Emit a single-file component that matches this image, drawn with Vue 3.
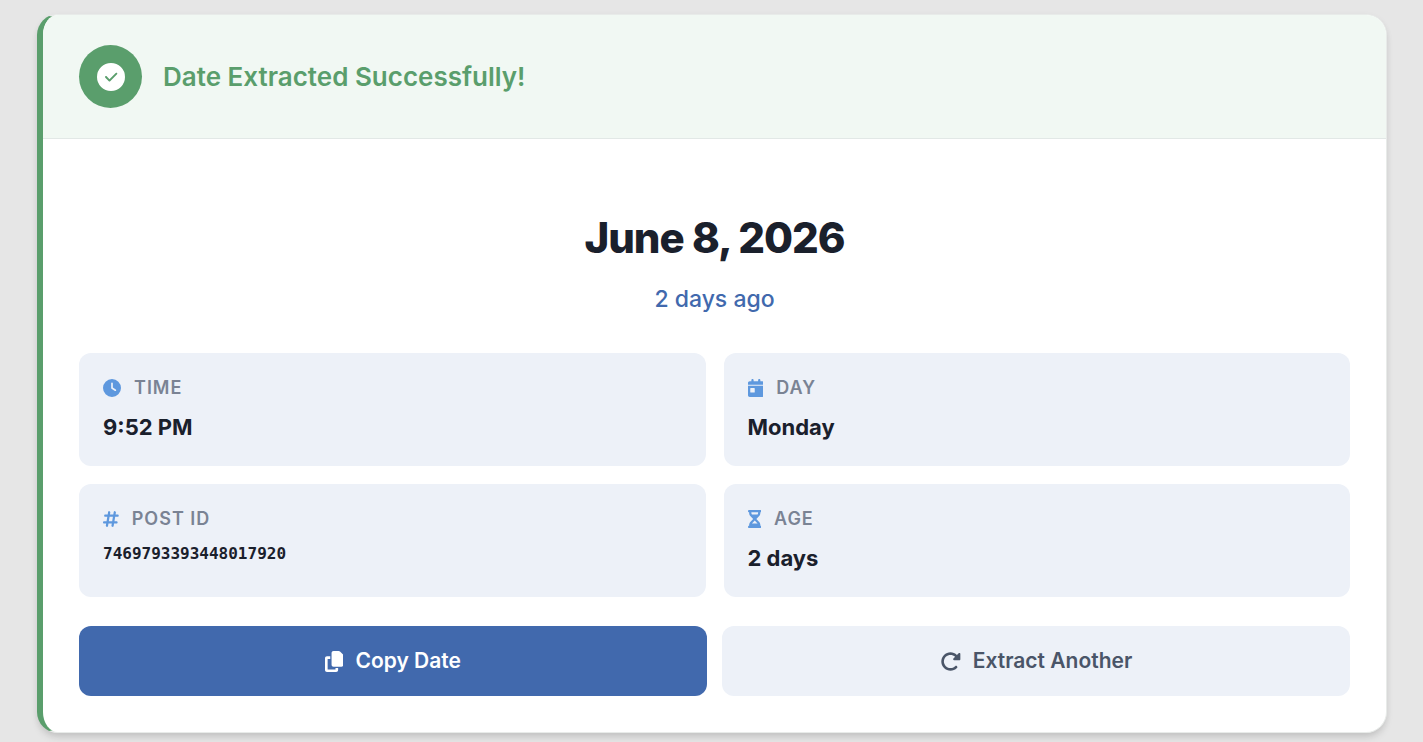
<script setup>
import { computed, ref } from "vue";

const result = ref({
  date: "June 8, 2026",
  relative: "2 days ago",
  time: "9:52 PM",
  day: "Monday",
  postId: "7469793393448017920",
  age: "2 days"
});

// w = viewBox width, every glyph is 512 high
const ICONS = {
  check: {
    w: 512,
    d: "M256 512A256 256 0 1 0 256 0a256 256 0 1 0 0 512zM367 207L241 333c-7 7-18 7-25 0l-64-64c-7-7-7-18 0-25s18-7 25 0l51 51L342 182c7-7 18-7 25 0s7 18 0 25z"
  },
  clock: {
    w: 512,
    d: "M256 0a256 256 0 1 1 0 512A256 256 0 1 1 256 0zM232 120V256c0 8 4 15.5 10.7 20l96 64c11 7.4 25.9 4.4 33.3-6.7s4.4-25.9-6.7-33.3L280 243.2V120c0-13.3-10.7-24-24-24s-24 10.7-24 24z"
  },
  calendar: {
    w: 448,
    d: "M128 0c17.7 0 32 14.3 32 32V64H288V32c0-17.7 14.3-32 32-32s32 14.3 32 32V64h48c26.5 0 48 21.5 48 48v48H0V112C0 85.5 21.5 64 48 64H96V32c0-17.7 14.3-32 32-32zM0 192H448V464c0 26.5-21.5 48-48 48H48c-26.5 0-48-21.5-48-48V192zm80 64c-8.8 0-16 7.2-16 16v96c0 8.8 7.2 16 16 16h96c8.8 0 16-7.2 16-16V272c0-8.8-7.2-16-16-16H80z"
  },
  hashtag: {
    w: 448,
    d: "M181.3 32.4c17.4 2.9 29.2 19.4 26.3 36.8L197.8 128h95.1l11.5-69.3c2.9-17.4 19.4-29.2 36.8-26.3s29.2 19.4 26.3 36.8L357.8 128H416c17.7 0 32 14.3 32 32s-14.3 32-32 32H347.1L325.8 320H384c17.7 0 32 14.3 32 32s-14.3 32-32 32H315.1l-11.5 69.3c-2.9 17.4-19.4 29.2-36.8 26.3s-29.2-19.4-26.3-36.8l9.8-58.7H155.1l-11.5 69.3c-2.9 17.4-19.4 29.2-36.8 26.3s-29.2-19.4-26.3-36.8L90.2 384H32c-17.7 0-32-14.3-32-32s14.3-32 32-32h68.9l21.3-128H64c-17.7 0-32-14.3-32-32s14.3-32 32-32h68.9l11.5-69.3c2.9-17.4 19.4-29.2 36.8-26.3zM187.1 192L165.8 320h95.1l21.3-128H187.1z"
  },
  hourglass: {
    w: 384,
    d: "M32 0C14.3 0 0 14.3 0 32S14.3 64 32 64V75c0 42.4 16.9 83.1 46.9 113.1L146.7 256 78.9 323.9C48.9 353.9 32 394.6 32 437v11c-17.7 0-32 14.3-32 32s14.3 32 32 32H352c17.7 0 32-14.3 32-32s-14.3-32-32-32V437c0-42.4-16.9-83.1-46.9-113.1L237.3 256l67.9-67.9c30-30 46.9-70.7 46.9-113.1V64c17.7 0 32-14.3 32-32s-14.3-32-32-32H32zM96 75V64H288V75c0 19-5.6 37.4-16 53H112c-10.3-15.6-16-34-16-53zm16 309c3.5-5.3 7.6-10.3 12.1-14.9L192 301.3l67.9 67.9c4.6 4.6 8.6 9.6 12.2 14.9H112z"
  },
  copy: {
    w: 448,
    d: "M208 0H332.1c12.7 0 24.9 5.1 33.9 14.1l67.9 67.9c9 9 14.1 21.2 14.1 33.9V336c0 26.5-21.5 48-48 48H208c-26.5 0-48-21.5-48-48V48c0-26.5 21.5-48 48-48zM48 128h80v64H64V448H256V416h64v48c0 26.5-21.5 48-48 48H48c-26.5 0-48-21.5-48-48V176c0-26.5 21.5-48 48-48z"
  },
  redo: {
    w: 512,
    d: "M463.5 224H472c13.3 0 24-10.7 24-24V72c0-9.7-5.8-18.5-14.8-22.2s-19.3-1.7-26.2 5.2L413.4 96.6c-87.6-86.5-228.7-86.2-315.8 1c-87.5 87.5-87.5 229.3 0 316.8s229.3 87.5 316.8 0c12.5-12.5 12.5-32.8 0-45.3s-32.8-12.5-45.3 0c-62.5 62.5-163.8 62.5-226.3 0s-62.5-163.8 0-226.3c62.2-62.2 162.7-62.5 225.3-1L327 183c-6.9 6.9-8.9 17.2-5.2 26.2s12.5 14.8 22.2 14.8H463.5z"
  }
};

const details = computed(() => [
  { key: "time", label: "Time", icon: ICONS.clock, value: result.value.time },
  { key: "day", label: "Day", icon: ICONS.calendar, value: result.value.day },
  { key: "postId", label: "Post ID", icon: ICONS.hashtag, value: result.value.postId, mono: true },
  { key: "age", label: "Age", icon: ICONS.hourglass, value: result.value.age }
]);

const emit = defineEmits(["reset"]);

function copyDate() {
  navigator.clipboard?.writeText(result.value.date);
}
</script>

<template>
  <main class="page">
    <section class="result-card">
      <header class="result-header">
        <span class="status-badge">
          <svg class="icon" :viewBox="`0 0 ${ICONS.check.w} 512`" aria-hidden="true">
            <path :d="ICONS.check.d" />
          </svg>
        </span>
        <h2 class="result-title">Date Extracted Successfully!</h2>
      </header>

      <div class="result-body">
        <div class="date-block">
          <p class="date-main">{{ result.date }}</p>
          <p class="date-relative">{{ result.relative }}</p>
        </div>

        <dl class="detail-grid">
          <div v-for="item in details" :key="item.key" class="detail-item">
            <dt class="detail-label">
              <svg class="icon" :viewBox="`0 0 ${item.icon.w} 512`" aria-hidden="true">
                <path :d="item.icon.d" />
              </svg>
              {{ item.label }}
            </dt>
            <dd class="detail-value" :class="{ mono: item.mono }">{{ item.value }}</dd>
          </div>
        </dl>

        <div class="actions">
          <button type="button" class="btn btn-primary" @click="copyDate">
            <svg class="icon" :viewBox="`0 0 ${ICONS.copy.w} 512`" aria-hidden="true">
              <path :d="ICONS.copy.d" />
            </svg>
            Copy Date
          </button>
          <button type="button" class="btn btn-secondary" @click="emit('reset')">
            <svg class="icon" :viewBox="`0 0 ${ICONS.redo.w} 512`" aria-hidden="true">
              <path :d="ICONS.redo.d" />
            </svg>
            Extract Another
          </button>
        </div>
      </div>
    </section>
  </main>
</template>

<style>
body {
  background: #e6e6e6;
}
</style>

<style scoped>
.page {
  padding: 14px 36px 9px 37px;
  font-family: Inter, "Liberation Sans", sans-serif;
  color: #1a202c;
}
.result-card {
  overflow: hidden;
  background: #fff;
  border: 1px solid #e8ebe9;
  border-left: 6px solid #5a9e6c;
  border-radius: 21px;
  box-shadow: 0 6px 9px -2px rgba(0, 0, 0, 0.12), 0 2px 6px rgba(0, 0, 0, 0.06);
}
.icon {
  display: block;
  flex: none;
  width: auto;
  fill: currentColor;
}
.result-header {
  display: flex;
  align-items: center;
  gap: 21px;
  padding: 30px 36px;
  background: #f1f8f3;
  border-bottom: 1px solid #e2e8e6;
}
.status-badge {
  display: flex;
  align-items: center;
  justify-content: center;
  width: 63px;
  height: 63px;
  border-radius: 50%;
  background: #5a9e6c;
  color: #fff;
}
.status-badge .icon {
  height: 28px;
}
.result-title {
  margin: 0;
  font-size: 26px;
  font-weight: 600;
  line-height: 33px;
  color: #5a9e6c;
}
.result-body {
  padding: 36px;
}
.date-block {
  padding: 35px 0;
  text-align: center;
}
.date-main {
  margin: 0;
  font-size: 42px;
  font-weight: 800;
  line-height: 56px;
  letter-spacing: -1px;
}
.date-relative {
  margin: 14px 0 0;
  font-size: 23px;
  font-weight: 500;
  line-height: 38px;
  color: #4169ad;
}
.detail-grid {
  display: grid;
  grid-template-columns: 1fr 1fr;
  gap: 18px;
  margin: 0 0 29px;
}
.detail-item {
  padding: 24px 24px 21px;
  background: #edf1f8;
  border-radius: 12px;
}
.detail-label {
  display: flex;
  align-items: center;
  gap: 13px;
  margin-bottom: 12px;
  font-size: 18px;
  font-weight: 600;
  line-height: 21px;
  letter-spacing: 1px;
  text-transform: uppercase;
  color: #7a8394;
}
.detail-label .icon {
  height: 18px;
  color: #5e98de;
}
.detail-value {
  margin: 0;
  font-size: 22px;
  font-weight: 700;
  line-height: 35px;
}
.detail-value.mono {
  font-family: "DejaVu Sans Mono", "Liberation Mono", monospace;
  font-size: 16px;
  line-height: 26px;
}
.actions {
  display: grid;
  grid-template-columns: 1fr 1fr;
  gap: 15px;
}
.btn {
  display: flex;
  align-items: center;
  justify-content: center;
  gap: 12px;
  padding: 20px 24px;
  border: 0;
  border-radius: 12px;
  font-family: inherit;
  font-size: 21px;
  font-weight: 600;
  line-height: 30px;
  cursor: pointer;
}
.btn .icon {
  height: 21px;
}
.btn-primary {
  background: #4169ad;
  color: #fff;
}
.btn-secondary {
  background: #edf1f8;
  color: #4a5568;
}
</style>
